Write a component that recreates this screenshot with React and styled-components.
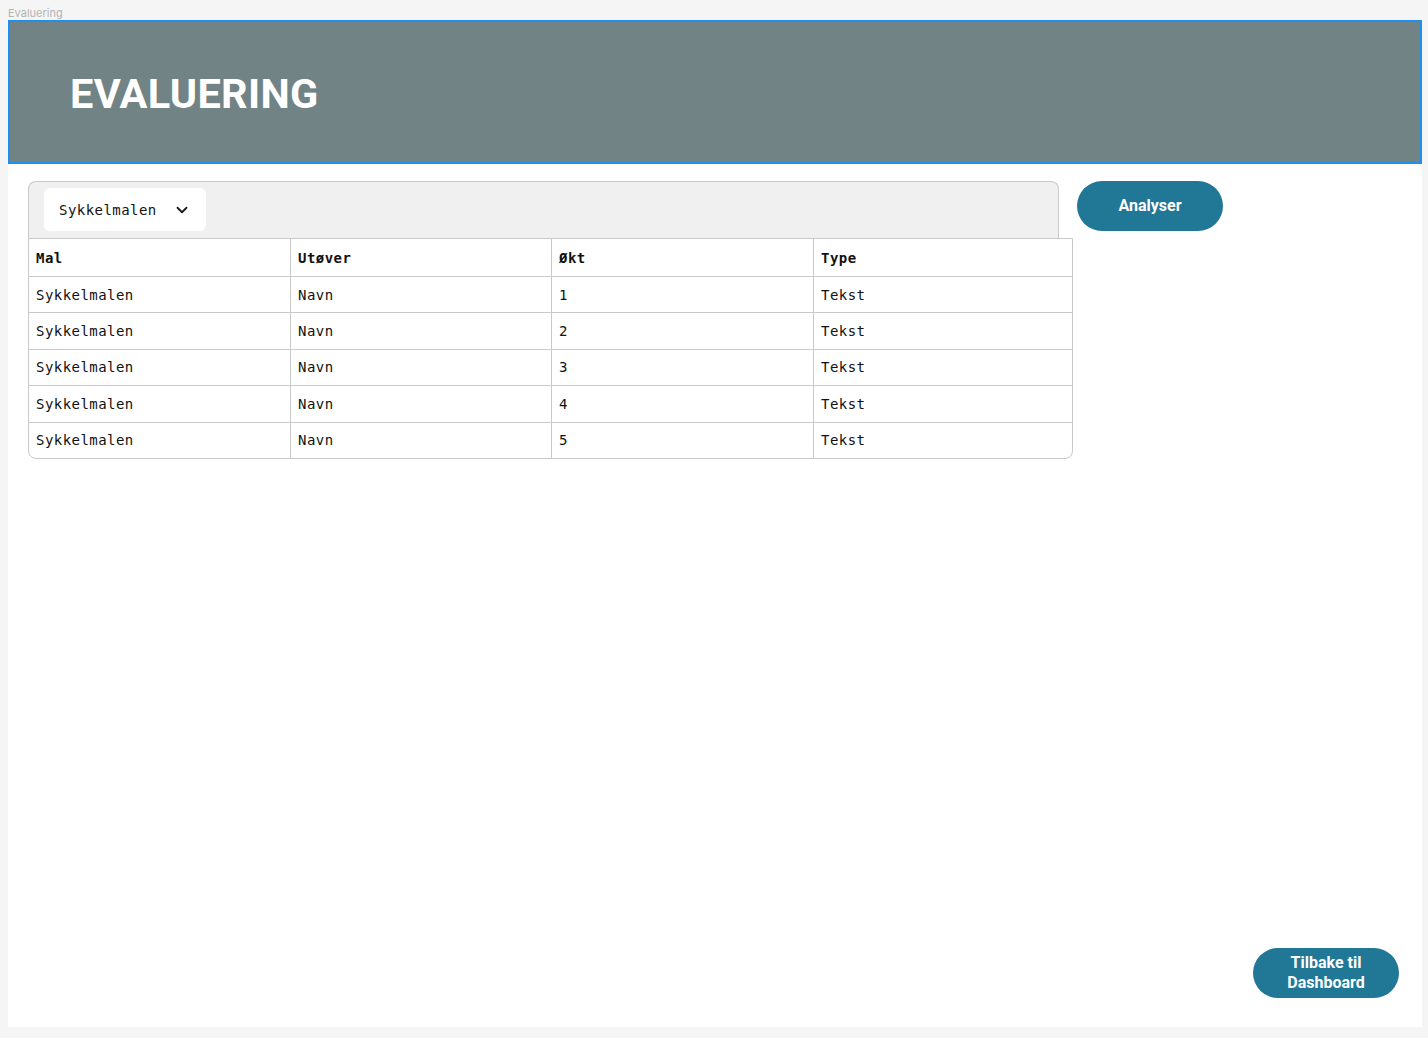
import React from "react";
import styled, { createGlobalStyle } from "styled-components";

const GlobalStyle = createGlobalStyle`
  html, body {
    margin: 0;
    padding: 0;
    background: #f5f5f5;
  }
  body {
    font-family: Roboto, "Liberation Sans", sans-serif;
  }
`;

const rows = [
  { mal: "Sykkelmalen", utover: "Navn", okt: "1", type: "Tekst" },
  { mal: "Sykkelmalen", utover: "Navn", okt: "2", type: "Tekst" },
  { mal: "Sykkelmalen", utover: "Navn", okt: "3", type: "Tekst" },
  { mal: "Sykkelmalen", utover: "Navn", okt: "4", type: "Tekst" },
  { mal: "Sykkelmalen", utover: "Navn", okt: "5", type: "Tekst" },
];

const ChevronDown = () => (
  <svg width="18" height="18" viewBox="0 0 24 24" fill="none" stroke="#1a1a1a" strokeWidth="2.4" strokeLinecap="round" strokeLinejoin="round">
    <path d="M6 9l6 6 6-6" />
  </svg>
);

const Evaluering = () => {
  return (
    <>
      <GlobalStyle />
      <Page>
        <FrameLabel>Evaluering</FrameLabel>
        <Frame>
          <Header>
            <Title>EVALUERING</Title>
          </Header>
          <Content>
            <TableColumn>
              <FilterBar>
                <Select>
                  Sykkelmalen
                  <ChevronDown />
                </Select>
              </FilterBar>
              <Table>
                <Row head>
                  <Cell>Mal</Cell>
                  <Cell>Utøver</Cell>
                  <Cell>Økt</Cell>
                  <Cell>Type</Cell>
                </Row>
                {rows.map((r, i) => (
                  <Row key={i} last={i === rows.length - 1}>
                    <Cell>{r.mal}</Cell>
                    <Cell>{r.utover}</Cell>
                    <Cell>{r.okt}</Cell>
                    <Cell>{r.type}</Cell>
                  </Row>
                ))}
              </Table>
            </TableColumn>
            <PillButton>Analyser</PillButton>
          </Content>
          <Footer>
            <PillButton>
              Tilbake til
              <br />
              Dashboard
            </PillButton>
          </Footer>
        </Frame>
      </Page>
    </>
  );
};

export default Evaluering;

const Page = styled.div`
  padding: 0 6px 11px 8px;
`;

const FrameLabel = styled.div`
  height: 20px;
  font-size: 11px;
  line-height: 26px;
  color: #b3b3b3;
  font-family: Inter, Roboto, sans-serif;
`;

const Frame = styled.div`
  background: #fff;
  min-height: 1007px;
  display: flex;
  flex-direction: column;
  box-sizing: border-box;
`;

const Header = styled.header`
  height: 144px;
  box-sizing: border-box;
  background: #718384;
  border: 2px solid #1e8ff0;
  display: flex;
  align-items: center;
  padding: 3px 0 0 60px;
`;

const Title = styled.h1`
  margin: 0;
  color: #fff;
  font-family: Roboto, sans-serif;
  font-weight: 700;
  font-size: 41.5px;
  letter-spacing: 0.3px;
`;

const Content = styled.main`
  display: flex;
  align-items: flex-start;
  gap: 4px;
  padding: 17px 0 0 20px;
  flex: 1;
`;

const TableColumn = styled.div`
  width: 1045px;
  display: flex;
  flex-direction: column;
  font-family: "DejaVu Sans Mono", "Liberation Mono", monospace;
  font-size: 14px;
  color: #111;
`;

const FilterBar = styled.div`
  width: 1031px;
  height: 57px;
  box-sizing: border-box;
  background: #f0f0f0;
  border: 1px solid #c9c9c9;
  border-bottom: none;
  border-radius: 8px 8px 0 0;
  padding: 6px 15px;
`;

const Select = styled.div`
  display: inline-flex;
  align-items: center;
  gap: 16px;
  height: 43px;
  box-sizing: border-box;
  padding: 0 15px 0 15px;
  background: #fff;
  border-radius: 6px;
  font-size: 14px;
  letter-spacing: 0.45px;
`;

const Table = styled.div`
  border: 1px solid #c9c9c9;
  border-radius: 0 0 8px 8px;
  overflow: hidden;
`;

const Row = styled.div`
  display: grid;
  grid-template-columns: 262px 261px 262px 1fr;
  height: ${(p) => (p.head ? "37px" : "35.4px")};
  border-bottom: ${(p) => (p.last ? "none" : "1px solid #c9c9c9")};
  font-weight: ${(p) => (p.head ? 700 : 400)};
  letter-spacing: 0.45px;
`;

const Cell = styled.div`
  display: flex;
  align-items: center;
  padding-left: 7px;
  border-right: 1px solid #c9c9c9;
  &:last-child {
    border-right: none;
  }
`;

const PillButton = styled.button`
  width: 146px;
  height: 50px;
  border: none;
  border-radius: 25px;
  background: #217796;
  color: #fff;
  font-family: Roboto, sans-serif;
  font-weight: 700;
  font-size: 16px;
  line-height: 20px;
  padding: 0;
  cursor: pointer;
`;

const Footer = styled.footer`
  display: flex;
  justify-content: flex-end;
  padding: 0 23px 29px 0;
`;
